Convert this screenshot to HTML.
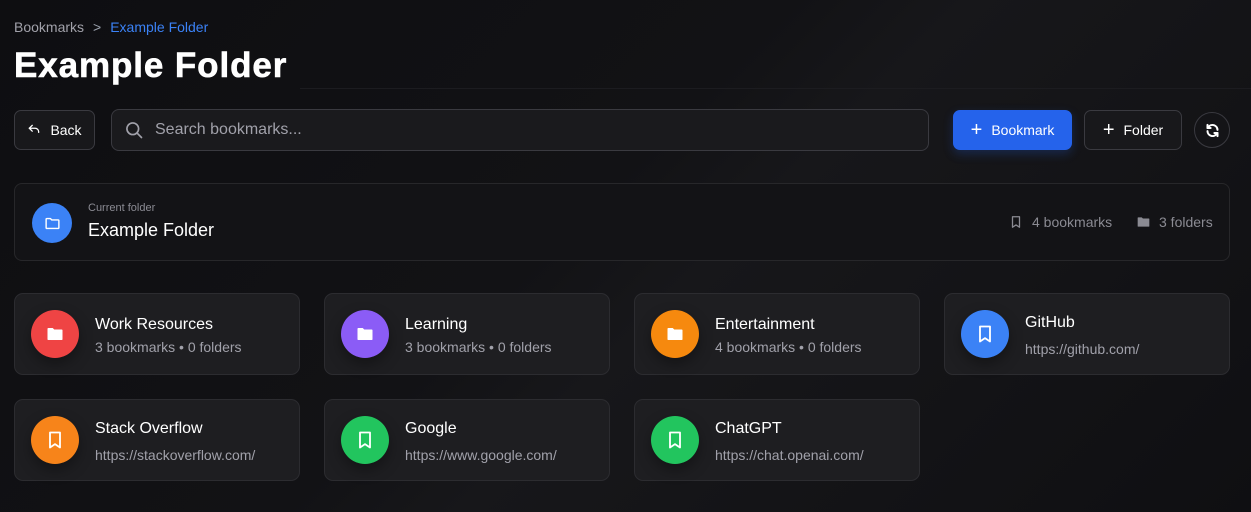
<!DOCTYPE html>
<html><head><style>
*{box-sizing:border-box;margin:0;padding:0}
body{width:1251px;height:512px;overflow:hidden;background:linear-gradient(135deg,#0e0e11 0%,#121215 45%,#17171a 55%,#0f0f12 100%);font-family:"Liberation Sans",sans-serif;color:#fff;position:relative}
.abs{position:absolute}
.crumb{left:14px;top:19px;font-size:14px;color:#a1a1aa}
.crumb .sep{margin:0 9px;color:#9ca3af}
.crumb .cur{color:#3b82f6}
h1{position:absolute;left:14px;top:46px;font-size:35px;font-weight:bold;letter-spacing:0.9px;-webkit-text-stroke:0.6px #fff}
.btn{position:absolute;border:1px solid #3a3a40;border-radius:7px;background:#18181b;display:flex;align-items:center;justify-content:center;font-size:14px;color:#fff;gap:9px}
.search{position:absolute;left:111px;top:109px;width:818px;height:42px;border:1px solid #3a3a40;border-radius:8px;background:#1a1a1d;display:flex;align-items:center;padding-left:12px;color:#a1a1aa;font-size:16px;gap:11px}
.cur-card{left:14px;top:183px;width:1216px;height:78px;border:1px solid #27272a;border-radius:8px;background:#131316}
.circle{position:absolute;border-radius:50%;display:flex;align-items:center;justify-content:center}
.card{position:absolute;width:286px;height:82px;border:1px solid #2c2c30;border-radius:9px;background:#1e1e21}
.card .circle{left:16px;top:16px;width:48px;height:48px;box-shadow:0 6px 14px rgba(0,0,0,.35)}
.card .t{position:absolute;left:80px;font-size:16px;color:#fff}
.card .s{position:absolute;left:80px;font-size:14px;color:#a1a1aa}
</style></head><body>
<div class="abs crumb">Bookmarks<span class="sep">&gt;</span><span class="cur">Example Folder</span></div>
<h1>Example Folder</h1>
<div class="abs" style="left:300px;top:88px;width:951px;height:1px;background:#1c1c20"></div>

<div class="btn" style="left:14px;top:110px;width:81px;height:40px"><svg width="14" height="14" viewBox="0 0 24 24" fill="none" stroke="#fff" stroke-width="2.2" stroke-linecap="round" stroke-linejoin="round"><path d="M9 14L4 9l5-5"/><path d="M4 9h10a6 6 0 0 1 6 6v1"/></svg>Back</div>
<div class="search"><svg width="20" height="20" viewBox="0 0 24 24" fill="none" stroke="#a1a1aa" stroke-width="2" stroke-linecap="round"><circle cx="10.5" cy="10.5" r="7"/><path d="M16 16l5 5"/></svg>Search bookmarks...</div>
<div class="btn" style="left:953px;top:110px;width:119px;height:40px;background:#2563eb;border-color:#2563eb;box-shadow:0 4px 10px rgba(37,99,235,.25)"><span style="font-size:20px;font-weight:300">+</span>Bookmark</div>
<div class="btn" style="left:1084px;top:110px;width:98px;height:40px"><span style="font-size:20px;font-weight:300">+</span>Folder</div>
<div class="btn" style="left:1194px;top:112px;width:36px;height:36px;border-radius:50%;background:#141417"><svg width="15" height="15" viewBox="0 0 24 24" fill="none" stroke="#fff" stroke-width="3.2" stroke-linecap="round" stroke-linejoin="round"><path d="M20 11a8 8 0 0 0-14.5-4.5L4 8"/><path d="M4 3v5h5"/><path d="M4 13a8 8 0 0 0 14.5 4.5L20 16"/><path d="M20 21v-5h-5"/></svg></div>

<div class="abs cur-card">
<div class="circle" style="left:17px;top:19px;width:40px;height:40px;background:#3b82f6"><svg width="17" height="17" viewBox="0 0 24 24" fill="none" stroke="#fff" stroke-width="2" stroke-linejoin="round"><path d="M3 6a1 1 0 0 1 1-1h5l2 2h9a1 1 0 0 1 1 1v10a1 1 0 0 1-1 1H4a1 1 0 0 1-1-1z"/></svg></div>
<div class="abs" style="left:73px;top:18px;font-size:11px;color:#8b8b93">Current folder</div>
<div class="abs" style="left:73px;top:36px;font-size:18px">Example Folder</div>
<div class="abs" style="left:994px;top:30px;font-size:14px;color:#8b8b93;display:flex;align-items:center;gap:9px"><svg width="14" height="14" viewBox="0 0 24 24" fill="none" stroke="#8b8b93" stroke-width="2.2" stroke-linejoin="round"><path d="M6 3h12v18l-6-4-6 4z"/></svg>4 bookmarks</div>
<div class="abs" style="left:1121px;top:30px;font-size:14px;color:#8b8b93;display:flex;align-items:center;gap:8px"><svg width="15" height="14" viewBox="0 0 24 24" fill="#8b8b93"><path d="M2 5a1 1 0 0 1 1-1h6l2 2h10a1 1 0 0 1 1 1v12a1 1 0 0 1-1 1H3a1 1 0 0 1-1-1z"/></svg>3 folders</div>
</div>

<div class="card" style="left:14px;top:293px"><div class="circle" style="background:#ef4444"><svg width="20" height="18" viewBox="0 0 24 24" fill="#fff"><path d="M2 5a1 1 0 0 1 1-1h6l2 2h10a1 1 0 0 1 1 1v12a1 1 0 0 1-1 1H3a1 1 0 0 1-1-1z"/></svg></div><div class="t" style="top:22px">Work Resources</div><div class="s" style="top:45px">3 bookmarks • 0 folders</div></div>
<div class="card" style="left:324px;top:293px"><div class="circle" style="background:#8b5cf6"><svg width="20" height="18" viewBox="0 0 24 24" fill="#fff"><path d="M2 5a1 1 0 0 1 1-1h6l2 2h10a1 1 0 0 1 1 1v12a1 1 0 0 1-1 1H3a1 1 0 0 1-1-1z"/></svg></div><div class="t" style="top:22px">Learning</div><div class="s" style="top:45px">3 bookmarks • 0 folders</div></div>
<div class="card" style="left:634px;top:293px"><div class="circle" style="background:#f6890e"><svg width="20" height="18" viewBox="0 0 24 24" fill="#fff"><path d="M2 5a1 1 0 0 1 1-1h6l2 2h10a1 1 0 0 1 1 1v12a1 1 0 0 1-1 1H3a1 1 0 0 1-1-1z"/></svg></div><div class="t" style="top:22px">Entertainment</div><div class="s" style="top:45px">4 bookmarks • 0 folders</div></div>
<div class="card" style="left:944px;top:293px"><div class="circle" style="background:#3b82f6"><svg width="20" height="20" viewBox="0 0 24 24" fill="none" stroke="#fff" stroke-width="2.2" stroke-linejoin="round"><path d="M6 3h12v18l-6-4-6 4z"/></svg></div><div class="t" style="top:20px">GitHub</div><div class="s" style="top:47px">https://github.com/</div></div>
<div class="card" style="left:14px;top:399px"><div class="circle" style="background:#f7841a"><svg width="20" height="20" viewBox="0 0 24 24" fill="none" stroke="#fff" stroke-width="2.2" stroke-linejoin="round"><path d="M6 3h12v18l-6-4-6 4z"/></svg></div><div class="t" style="top:20px">Stack Overflow</div><div class="s" style="top:47px">https://stackoverflow.com/</div></div>
<div class="card" style="left:324px;top:399px"><div class="circle" style="background:#22c55e"><svg width="20" height="20" viewBox="0 0 24 24" fill="none" stroke="#fff" stroke-width="2.2" stroke-linejoin="round"><path d="M6 3h12v18l-6-4-6 4z"/></svg></div><div class="t" style="top:20px">Google</div><div class="s" style="top:47px">https://www.google.com/</div></div>
<div class="card" style="left:634px;top:399px"><div class="circle" style="background:#22c55e"><svg width="20" height="20" viewBox="0 0 24 24" fill="none" stroke="#fff" stroke-width="2.2" stroke-linejoin="round"><path d="M6 3h12v18l-6-4-6 4z"/></svg></div><div class="t" style="top:20px">ChatGPT</div><div class="s" style="top:47px">https://chat.openai.com/</div></div>
</body></html>
